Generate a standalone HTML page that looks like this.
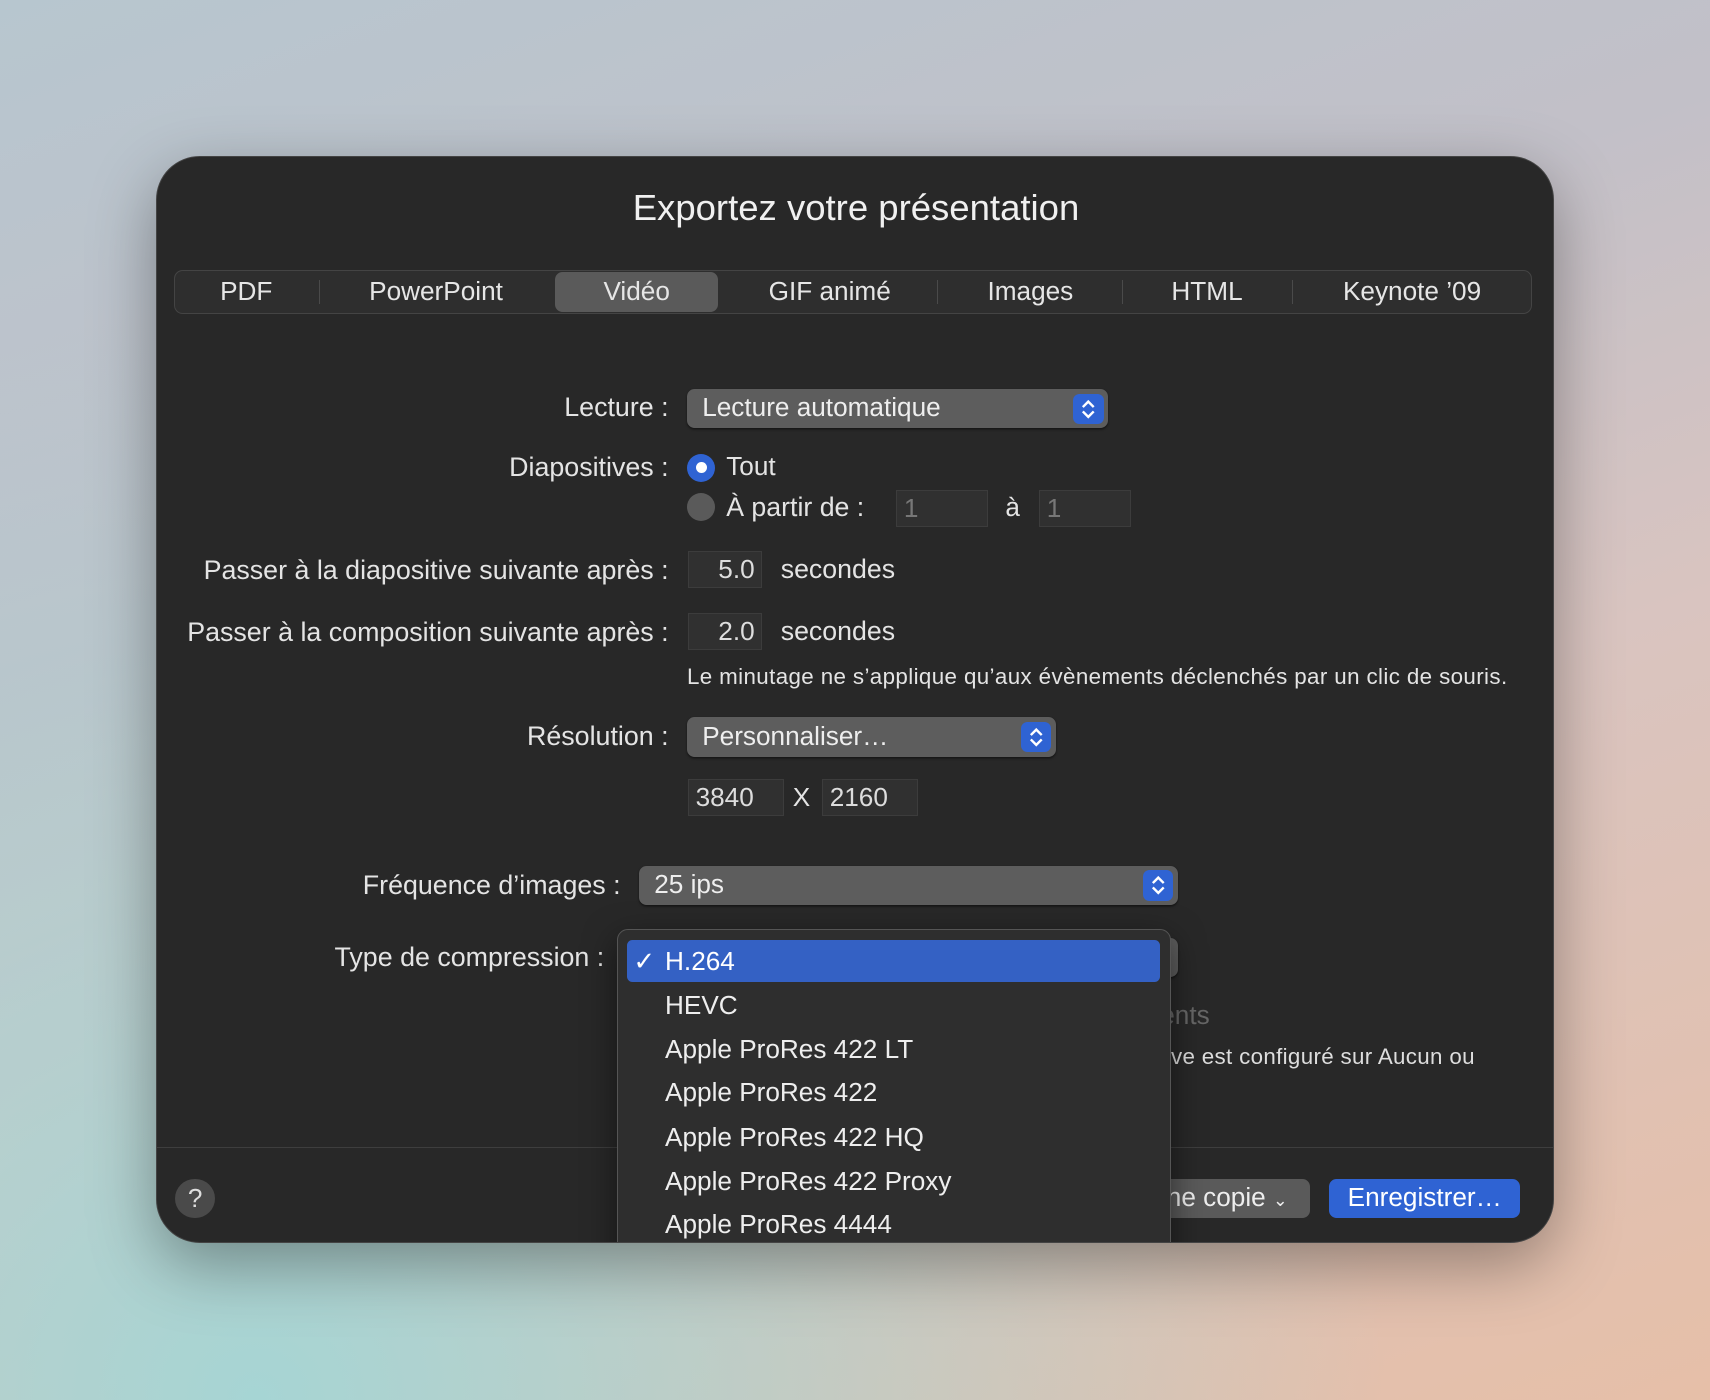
<!DOCTYPE html>
<html><head><meta charset="utf-8"><style>
*{margin:0;padding:0;box-sizing:border-box}
html,body{width:1710px;height:1400px;overflow:hidden}
body{background:linear-gradient(160deg,#b7c6cf 0%,#c2c0c8 35%,#d9c4c0 60%,#e6bfa8 100%);font-family:"Liberation Sans",sans-serif}
#bg2{position:absolute;left:0;top:0;width:1710px;height:1400px;background:radial-gradient(ellipse at 15% 100%,rgba(160,215,215,.9),rgba(160,215,215,0) 55%)}
#w{position:absolute;left:0;top:0;width:1568px;height:1284px;zoom:1.09056}
.win{position:absolute;left:143px;top:143px;width:1282px;height:997px;background:#282828;border-radius:40px;overflow:hidden;box-shadow:0 20px 60px rgba(0,0,0,.35);border:1px solid #444}
.a{position:absolute;color:#e4e4e4;font-size:24px;white-space:nowrap}
.lbl{position:absolute;right:811px;color:#e4e4e4;font-size:24.6px;white-space:nowrap}
.pop{position:absolute;background:#5d5d5d;border-radius:7px;height:36px;color:#eee;font-size:24px;padding:3px 14px;box-shadow:0 1px 2px rgba(0,0,0,.5)}
.pop .s{position:absolute;right:4px;top:4px;width:28px;height:28px;background:#2f63d3;border-radius:6px}
.fld{position:absolute;background:#303030;border:1px solid #3c3c3c;height:34px;font-size:24px;color:#ddd;padding:2px 6px}
.tab{position:absolute;top:0;height:39px;line-height:37px;font-size:24px;color:#e6e6e6;text-align:center}
.sep{position:absolute;top:8px;width:1px;height:22px;background:#4a4a4a}
.mi{position:absolute;left:43px;font-size:24px;color:#eee}
</style></head><body><div id="bg2"></div><div id="w">
<div class="win">
<div class="a" style="left:0;width:1282px;text-align:center;top:28px;font-size:33.5px;color:#f0f0f0">Exportez votre présentation</div>
<div style="position:absolute;left:16px;top:104px;width:1245px;height:40px;background:#2e2e2e;border:1px solid #444;border-radius:8px">
<div style="position:absolute;left:348px;top:1px;width:150px;height:36px;background:#5a5a5a;border-radius:7px"></div>
<div class="tab" style="left:0;width:130px">PDF</div><div class="sep" style="left:132px"></div>
<div class="tab" style="left:132px;width:214px">PowerPoint</div>
<div class="tab" style="left:348px;width:150px">Vidéo</div>
<div class="tab" style="left:500px;width:200px">GIF animé</div><div class="sep" style="left:698px"></div>
<div class="tab" style="left:700px;width:168px">Images</div><div class="sep" style="left:868px"></div>
<div class="tab" style="left:868px;width:156px">HTML</div><div class="sep" style="left:1024px"></div>
<div class="tab" style="left:1024px;width:220px">Keynote ’09</div>
</div>
<div class="lbl" style="top:216px">Lecture :</div>
<div class="pop" style="left:486px;top:213px;width:386px">Lecture automatique<div class="s"><svg width="28" height="28"><path d="M9 12l5-5 5 5M9 16l5 5 5-5" stroke="#fff" stroke-width="2.2" fill="none"/></svg></div></div>
<div class="lbl" style="top:271px">Diapositives :</div>
<div style="position:absolute;left:486px;top:272px;width:26px;height:26px;border-radius:50%;background:#2f63d3"><div style="position:absolute;left:8px;top:8px;width:10px;height:10px;border-radius:50%;background:#fff"></div></div>
<div class="a" style="left:522px;top:270px">Tout</div>
<div style="position:absolute;left:486px;top:308px;width:26px;height:26px;border-radius:50%;background:#5a5a5a"></div>
<div class="a" style="left:522px;top:307px;font-size:24.5px">À partir de :</div>
<div class="fld" style="left:678px;top:305px;width:84px;color:#777">1</div>
<div class="a" style="left:778px;top:307px">à</div>
<div class="fld" style="left:809px;top:305px;width:84px;color:#777">1</div>
<div class="lbl" style="top:365px">Passer à la diapositive suivante après :</div>
<div class="fld" style="left:487px;top:361px;width:68px;text-align:right">5.0</div>
<div class="a" style="left:572px;top:364px;font-size:24.5px">secondes</div>
<div class="lbl" style="top:422px">Passer à la composition suivante après :</div>
<div class="fld" style="left:487px;top:418px;width:68px;text-align:right">2.0</div>
<div class="a" style="left:572px;top:421px;font-size:24.5px">secondes</div>
<div class="a" style="left:486px;top:465px;font-size:20.5px;letter-spacing:0.35px">Le minutage ne s’applique qu’aux évènements déclenchés par un clic de souris.</div>
<div class="lbl" style="top:517px">Résolution :</div>
<div class="pop" style="left:486px;top:514px;width:338px">Personnaliser…<div class="s"><svg width="28" height="28"><path d="M9 12l5-5 5 5M9 16l5 5 5-5" stroke="#fff" stroke-width="2.2" fill="none"/></svg></div></div>
<div class="fld" style="left:487px;top:570px;width:88px">3840</div>
<div class="a" style="left:583px;top:573px">X</div>
<div class="fld" style="left:610px;top:570px;width:88px">2160</div>
<div class="a" style="right:855px;top:654px;font-size:24.6px">Fréquence d’images :</div>
<div class="pop" style="left:442px;top:650px;width:494px">25 ips<div class="s"><svg width="28" height="28"><path d="M9 12l5-5 5 5M9 16l5 5 5-5" stroke="#fff" stroke-width="2.2" fill="none"/></svg></div></div>
<div class="a" style="right:870px;top:720px;font-size:24.6px">Type de compression :</div>
<div class="pop" style="left:442px;top:716px;width:494px"></div>
<div class="a" style="left:920px;top:773px;color:#666">ents</div>
<div class="a" style="left:925px;top:813px;font-size:20.5px;letter-spacing:0.3px;color:#ddd">ive est configuré sur Aucun ou</div>
<div style="position:absolute;left:0;top:908px;width:1282px;height:1px;background:#3e3e3e"></div>
<div style="position:absolute;left:17px;top:937px;width:36px;height:36px;border-radius:50%;background:#4a4a4a;color:#ddd;font-size:24px;text-align:center;line-height:36px">?</div>
<div style="position:absolute;left:900px;top:937px;width:157px;height:36px;background:#5a5a5a;border-radius:7px;color:#eee;font-size:24px;line-height:34px;padding-left:26px">ne copie <span style="font-size:16px">⌄</span></div>
<div style="position:absolute;left:1075px;top:937px;width:175px;height:36px;background:#2f63d3;border-radius:7px;color:#fff;font-size:24px;line-height:34px;text-align:center">Enregistrer…</div>
<div style="position:absolute;left:422px;top:708px;width:508px;height:320px;background:#2e2e2e;border:1px solid #555;border-radius:10px;box-shadow:0 10px 30px rgba(0,0,0,.5)">
<div style="position:absolute;left:8px;top:9px;width:489px;height:39px;background:#3461c4;border-radius:5px"></div>
<div class="mi" style="left:14px;top:15px;color:#fff">✓</div>
<div class="mi" style="top:15px;color:#fff">H.264</div>
<div class="mi" style="top:55px">HEVC</div>
<div class="mi" style="top:95px">Apple ProRes 422 LT</div>
<div class="mi" style="top:135px">Apple ProRes 422</div>
<div class="mi" style="top:176px">Apple ProRes 422 HQ</div>
<div class="mi" style="top:216px">Apple ProRes 422 Proxy</div>
<div class="mi" style="top:256px">Apple ProRes 4444</div>
</div>
</div>
</div></body></html>
